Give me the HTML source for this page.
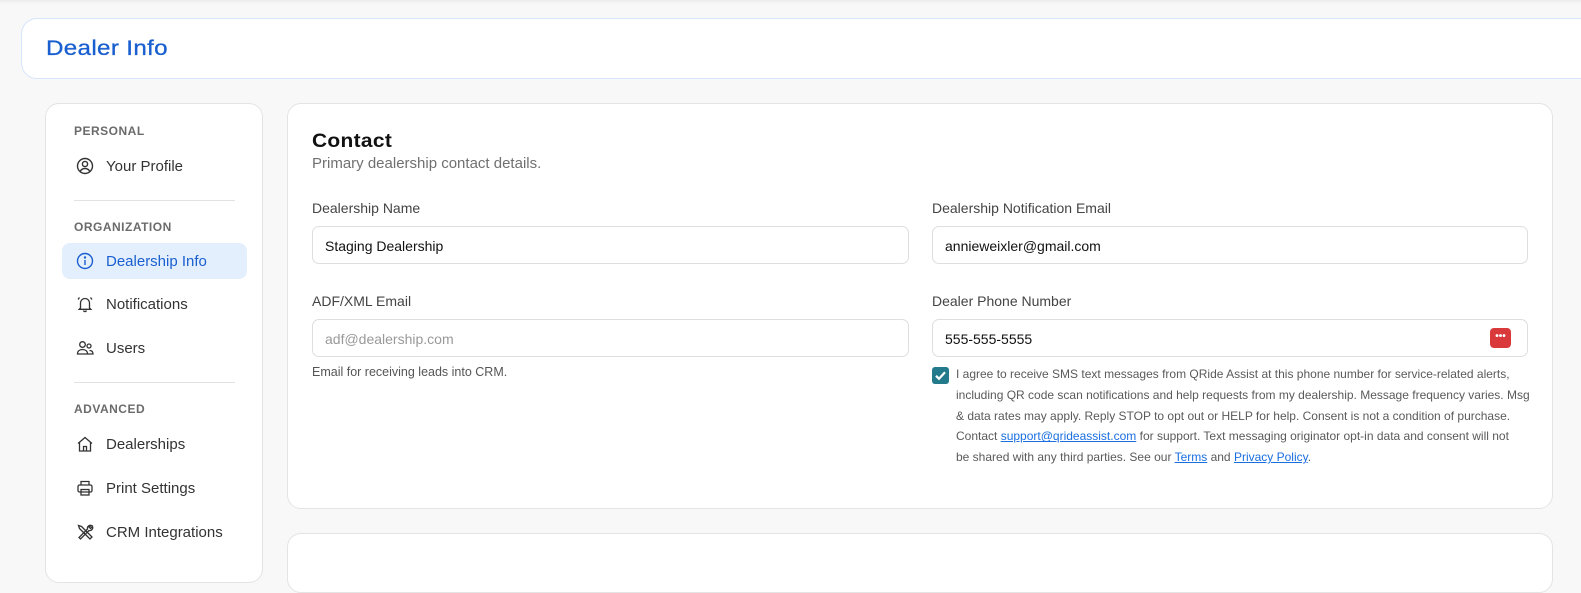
<!DOCTYPE html>
<html><head><meta charset="utf-8"><style>
*{box-sizing:border-box;margin:0;padding:0}
body{width:1581px;height:564px;overflow:hidden;background:#f8f8f8;font-family:"Liberation Sans",sans-serif;color:#333;position:relative}
.topshade{position:absolute;left:0;top:0;width:1581px;height:4px;background:linear-gradient(#ececec,#f8f8f8)}
.hdr{position:absolute;left:21px;top:18px;width:1580px;height:61px;background:#fff;border:1px solid #d6e6fb;border-radius:16px}
.hdr h1{position:absolute;left:24px;top:18px;font-size:21px;font-weight:normal;color:#1a5fd0;letter-spacing:0.3px;transform:scaleX(1.15);transform-origin:left;-webkit-text-stroke:0.3px #1a5fd0}
.side{position:absolute;left:45px;top:103px;width:218px;height:480px;background:#fff;border:1px solid #e4e4e4;border-radius:14px}
.sec{position:absolute;left:28px;font-size:12px;font-weight:bold;color:#6b6b6b;letter-spacing:0.5px}
.item{position:absolute;left:16px;width:185px;height:36px;border-radius:8px;font-size:15px;color:#333}
.item svg{position:absolute;left:14px;top:9px}
.item span{position:absolute;left:44px;top:10px}
.item.act{background:#e3effc;color:#1a5fd0}
.hr{position:absolute;left:28px;width:161px;height:1px;background:#e2e2e2}
.main{position:absolute;left:287px;top:103px;width:1266px;height:406px;background:#fff;border:1px solid #e4e4e4;border-radius:14px}
.main2{position:absolute;left:287px;top:533px;width:1266px;height:60px;background:#fff;border:1px solid #e4e4e4;border-radius:14px}
h2{position:absolute;left:24px;top:27px;font-size:19px;font-weight:bold;color:#111;letter-spacing:0.3px;transform:scaleX(1.1);transform-origin:left}
.sub{position:absolute;left:24px;top:51px;font-size:15px;color:#707070}
.lbl{position:absolute;font-size:14px;color:#444}
.inp{position:absolute;width:597px;height:38px;border:1px solid #dedede;border-radius:7px;font-size:14px;color:#111;padding:11px 12px}
.inp.ph{color:#999}
.help{position:absolute;left:24px;top:261px;font-size:12.5px;color:#555}
.chk{position:absolute;left:644px;top:263px;width:17px;height:17px;background:#237a8a;border-radius:3px}
.consent{position:absolute;left:668px;top:260px;width:600px;white-space:nowrap;font-size:12px;line-height:20.8px;color:#5a5a5a}
.consent a{color:#1a6fe0;text-decoration:underline}
.red{position:absolute;right:16px;top:8px;width:21px;height:20px;background:#d9393b;border-radius:4px;color:#fff;font-size:10px;text-align:center;line-height:18px;font-weight:bold}
</style></head><body>
<div class="topshade"></div>
<div class="hdr"><h1>Dealer Info</h1></div>

<div class="side">
<div class="sec" style="top:20px">PERSONAL</div>
<div class="item" style="top:44px"><svg width="18" height="18" viewBox="0 0 18 18" fill="none" stroke="#333" stroke-width="1.4"><circle cx="9" cy="9" r="7.5"/><circle cx="9" cy="7" r="2.6"/><path d="M4.2 14.3c1.2-2 2.8-2.8 4.8-2.8s3.6.8 4.8 2.8"/></svg><span>Your Profile</span></div>
<div class="hr" style="top:96px"></div>
<div class="sec" style="top:116px">ORGANIZATION</div>
<div class="item act" style="top:139px"><svg width="18" height="18" viewBox="0 0 18 18" fill="none" stroke="#1a5fd0" stroke-width="1.4"><circle cx="9" cy="9" r="7.5"/><path d="M9 8v5"/><circle cx="9" cy="5.5" r=".5" fill="#1a5fd0"/></svg><span>Dealership Info</span></div>
<div class="item" style="top:182px"><svg width="18" height="18" viewBox="0 0 18 18" fill="none" stroke="#333" stroke-width="1.3"><path d="M4.5 13V8a4.5 4.5 0 0 1 9 0v5l1.3 1.3H3.2z"/><path d="M7.5 15.5a1.6 1.6 0 0 0 3 0"/><path d="M2 4.5 3.5 2.5M16 4.5 14.5 2.5"/></svg><span>Notifications</span></div>
<div class="item" style="top:226px"><svg width="18" height="18" viewBox="0 0 18 18" fill="none" stroke="#333" stroke-width="1.3"><circle cx="6.5" cy="5.5" r="2.8"/><path d="M1.5 15c0-3 2.2-4.5 5-4.5s5 1.5 5 4.5z"/><circle cx="13" cy="7" r="2"/><path d="M12 15h5c0-2.3-1.3-3.5-3.5-3.5"/></svg><span>Users</span></div>
<div class="hr" style="top:278px"></div>
<div class="sec" style="top:298px">ADVANCED</div>
<div class="item" style="top:322px"><svg width="18" height="18" viewBox="0 0 18 18" fill="none" stroke="#333" stroke-width="1.3"><path d="M2 8.5 9 2.5l7 6"/><path d="M3.5 7.5V16h11V7.5"/><path d="M7.5 16v-4.5h3V16"/></svg><span>Dealerships</span></div>
<div class="item" style="top:366px"><svg width="18" height="18" viewBox="0 0 18 18" fill="none" stroke="#333" stroke-width="1.3"><path d="M5 6V2.5h8V6"/><rect x="2" y="6" width="14" height="7" rx="1.5"/><rect x="5" y="10.5" width="8" height="5.5"/></svg><span>Print Settings</span></div>
<div class="item" style="top:410px"><svg width="18" height="18" viewBox="0 0 18 18" fill="none" stroke="#333" stroke-width="1.3"><path d="M2.5 2.5l3 1 8.5 8.5 2 2-2 2-2-2-8.5-8.5z"/><path d="M15.5 2.5a3 3 0 0 0-4 3.5L3 14.5l1.5 1.5L13 7.5a3 3 0 0 0 3.5-4l-2 2-1.5-1.5z"/></svg><span>CRM Integrations</span></div>
</div>

<div class="main">
<h2>Contact</h2>
<div class="sub">Primary dealership contact details.</div>
<div class="lbl" style="left:24px;top:96px">Dealership Name</div>
<div class="inp" style="left:24px;top:122px">Staging Dealership</div>
<div class="lbl" style="left:644px;top:96px">Dealership Notification Email</div>
<div class="inp" style="left:644px;top:122px;width:596px">annieweixler@gmail.com</div>
<div class="lbl" style="left:24px;top:189px">ADF/XML Email</div>
<div class="inp ph" style="left:24px;top:215px">adf@dealership.com</div>
<div class="help">Email for receiving leads into CRM.</div>
<div class="lbl" style="left:644px;top:189px">Dealer Phone Number</div>
<div class="inp" style="left:644px;top:215px;width:596px">555-555-5555<div class="red">•••</div></div>
<div class="chk"><svg width="17" height="17" viewBox="0 0 17 17" fill="none" stroke="#fff" stroke-width="2.2"><path d="M4 8.8l3 3 6-6.5"/></svg></div>
<div class="consent">I agree to receive SMS text messages from QRide Assist at this phone number for service-related alerts,<br>including QR code scan notifications and help requests from my dealership. Message frequency varies. Msg<br>&amp; data rates may apply. Reply STOP to opt out or HELP for help. Consent is not a condition of purchase.<br>Contact <a>support@qrideassist.com</a> for support. Text messaging originator opt-in data and consent will not<br>be shared with any third parties. See our <a>Terms</a> and <a>Privacy Policy</a>.</div>
</div>
<div class="main2"></div>
</body></html>
